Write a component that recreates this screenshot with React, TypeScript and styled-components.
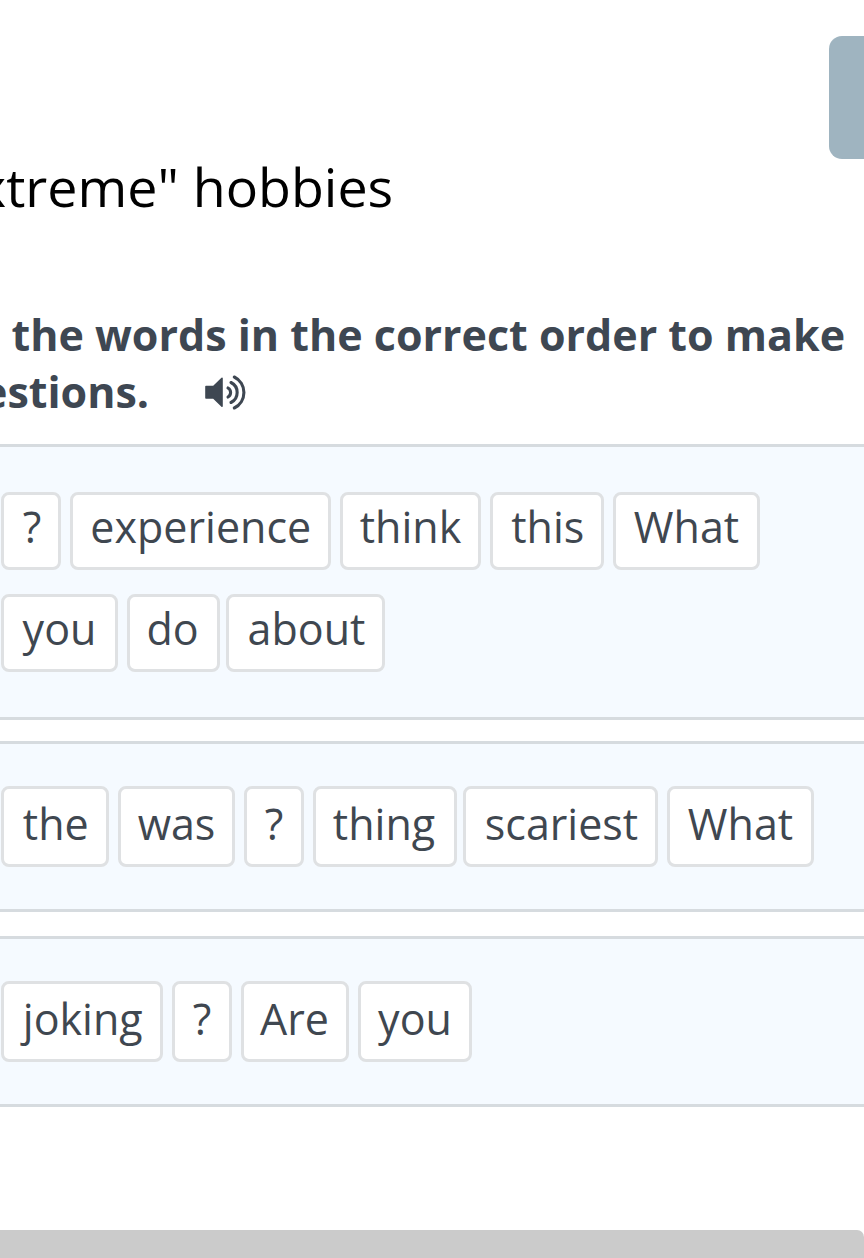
import React from "react";
import styled, { createGlobalStyle } from "styled-components";

const Global = createGlobalStyle`
  html, body { margin: 0; background: #fff; overflow: hidden; }
  * { box-sizing: border-box; }
`;
const Page = styled.main`
  width: 864px; height: 1258px; overflow: hidden; display: flex; flex-direction: column;
  font-family: "Open Sans", sans-serif; color: #3f4750; white-space: nowrap;
`;
const Header = styled.header`
  height: 158px; padding-top: 36px; display: flex; justify-content: flex-end; flex: none;
`;
const SideButton = styled.div`
  width: 35px; height: 123px; background: #9fb4c0; border-radius: 13px 0 0 13px; flex: none;
`;
const Title = styled.h1`
  margin: 0 0 0 -22px; height: 148px; font-size: 53.75px; font-weight: 400; line-height: 58px; color: #000; flex: none;
`;
const Instruction = styled.h2`
  margin: 0; height: 138px; font-size: 43px; font-weight: 700; line-height: 57px; color: #3e4752; flex: none;
`;
const Line = styled.div<{ $shift: number }>`
  display: flex; align-items: center; height: 57px; margin-left: ${p => p.$shift}px;
`;
const Speaker = styled.svg`
  width: 42px; height: 38px; margin-left: 55px;
`;
const Question = styled.section<{ $height: number; $gap: number; $top: number }>`
  height: ${p => p.$height}px; margin-bottom: ${p => p.$gap}px; padding: ${p => p.$top}px 0 0 1px;
  background: #f5faff; border: solid #d6dbdf; border-width: 3px 0;
  display: flex; flex-direction: column; gap: 24px; flex: none;
`;
const Row = styled.div`
  display: flex;
`;
const Word = styled.span<{ $w: number; $h: number; $gap: number; $line: number; $nudge: number }>`
  width: ${p => p.$w}px; height: ${p => p.$h}px; margin-right: ${p => p.$gap}px; flex: none;
  border: 3px solid #dfe1e3; border-radius: 8px; background: #fff;
  display: flex; justify-content: center; font-size: 43px; line-height: ${p => p.$line}px;
  text-indent: ${p => p.$nudge}px;
`;
const Footer = styled.footer`
  flex: none; height: 28px; margin-top: 123px; background: #cbcbcb; border-top-right-radius: 7px;
`;

type Item = [text: string, width: number, gap: number, nudge: number];
const questions: { height: number; gap: number; top: number; h: number; line: number; rows: Item[][] }[] = [
  { height: 276, gap: 21, top: 45, h: 78, line: 64, rows: [
    [["?", 60, 9, 2], ["experience", 261, 9, 0.5], ["think", 141, 9, 0], ["this", 114, 9, 1.5], ["What", 147, 0, 0]],
    [["you", 117, 9, 0], ["do", 93, 6, -2], ["about", 159, 0, 2]],
  ] },
  { height: 171, gap: 24, top: 42, h: 81, line: 70, rows: [
    [["the", 108, 9, 1.5], ["was", 117, 9, 0], ["?", 60, 9, 0], ["thing", 144, 6, -2], ["scariest", 195, 9, 2], ["What", 147, 0, 0]],
  ] },
  { height: 171, gap: 0, top: 42, h: 81, line: 70, rows: [
    [["joking", 162, 9, 1.5], ["?", 60, 9, 0], ["Are", 108, 9, -1], ["you", 114, 0, 0]],
  ] },
];

export default function App() {
  return (
    <Page>
      <Global />
      <Header><SideButton /></Header>
      <Title>xtreme" hobbies</Title>
      <Instruction>
        <Line $shift={11.5}>the words in the correct order to make</Line>
        <Line $shift={-18}>
          estions.
          <Speaker viewBox="0 0 42 38" fill="none" stroke="#3e4752" strokeWidth="3.1" strokeLinecap="round">
            <path d="M2 13.5h7.5L18 5.3v28L9.5 25H2z" fill="#3e4752" strokeWidth="1.6" strokeLinejoin="round" />
            <path d="M24 15a5.2 5.2 0 0 1 0 9M27 9.5a11.2 11.2 0 0 1 0 20M30.3 4a17.3 17.3 0 0 1 0 31" />
          </Speaker>
        </Line>
      </Instruction>
      {questions.map((q, i) => (
        <Question key={i} $height={q.height} $gap={q.gap} $top={q.top}>
          {q.rows.map((row, j) => (
            <Row key={j}>
              {row.map(([text, w, gap, nudge]) => (
                <Word key={text} $w={w} $h={q.h} $gap={gap} $line={q.line} $nudge={nudge}>{text}</Word>
              ))}
            </Row>
          ))}
        </Question>
      ))}
      <Footer />
    </Page>
  );
}
